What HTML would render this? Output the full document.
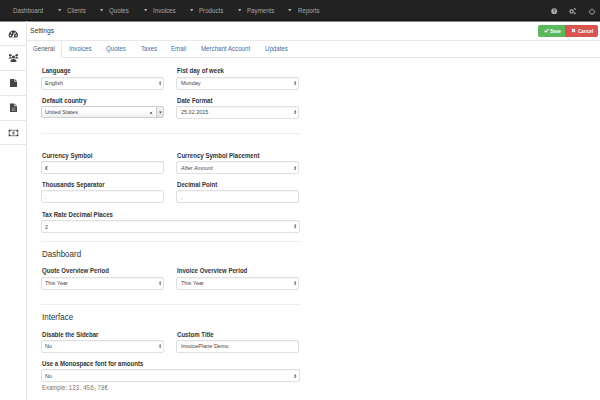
<!DOCTYPE html>
<html><head><meta charset="utf-8">
<style>
*{box-sizing:border-box;margin:0;padding:0}
html,body{width:600px;height:400px;overflow:hidden;background:#fff;font-family:"Liberation Sans",sans-serif;position:relative}
.a{position:absolute;white-space:nowrap;line-height:1;transform-origin:0 0}
.caret{position:absolute;top:9.6px;width:0;height:0;border-left:1.6px solid transparent;border-right:1.6px solid transparent;border-top:1.9px solid #a8a8a8}
.sep{position:absolute;left:0;width:26px;height:1px;background:#e6e6e6}
.hline{position:absolute;height:1px;background:#e8e8e8}
.box{position:absolute;height:12.5px;border:1px solid #e0e0e0;border-radius:2px;background:#fff;box-shadow:inset 0 1px 1px rgba(0,0,0,.04)}
.hr{position:absolute;left:41px;width:259px;height:1px;background:#eee}
.arr{position:absolute;width:3px;height:5px}
</style></head><body>
<div class="a" style="left:0;top:0;width:600px;height:21px;background:#222;border-bottom:1px solid #161616;box-shadow:0 1px 0 rgba(0,0,0,.45)"></div>
<span class="a" style="left:13px;top:8.0px;font-size:6.9px;color:#a4a4a4;transform:scaleX(0.895);">Dashboard</span>
<svg class="a" style="left:57.7px;top:9.3px" width="3.6" height="2.6" viewBox="0 0 3.6 2.6"><path d="M0 0 H3.6 L1.8 2.6Z" fill="#a8a8a8"/></svg>
<span class="a" style="left:67px;top:8.0px;font-size:6.9px;color:#a4a4a4;transform:scaleX(0.895);">Clients</span>
<svg class="a" style="left:99.5px;top:9.3px" width="3.6" height="2.6" viewBox="0 0 3.6 2.6"><path d="M0 0 H3.6 L1.8 2.6Z" fill="#a8a8a8"/></svg>
<span class="a" style="left:109px;top:8.0px;font-size:6.9px;color:#a4a4a4;transform:scaleX(0.895);">Quotes</span>
<svg class="a" style="left:143.5px;top:9.3px" width="3.6" height="2.6" viewBox="0 0 3.6 2.6"><path d="M0 0 H3.6 L1.8 2.6Z" fill="#a8a8a8"/></svg>
<span class="a" style="left:153px;top:8.0px;font-size:6.9px;color:#a4a4a4;transform:scaleX(0.895);">Invoices</span>
<svg class="a" style="left:189.5px;top:9.3px" width="3.6" height="2.6" viewBox="0 0 3.6 2.6"><path d="M0 0 H3.6 L1.8 2.6Z" fill="#a8a8a8"/></svg>
<span class="a" style="left:199px;top:8.0px;font-size:6.9px;color:#a4a4a4;transform:scaleX(0.895);">Products</span>
<svg class="a" style="left:237.5px;top:9.3px" width="3.6" height="2.6" viewBox="0 0 3.6 2.6"><path d="M0 0 H3.6 L1.8 2.6Z" fill="#a8a8a8"/></svg>
<span class="a" style="left:247px;top:8.0px;font-size:6.9px;color:#a4a4a4;transform:scaleX(0.895);">Payments</span>
<svg class="a" style="left:288.4px;top:9.3px" width="3.6" height="2.6" viewBox="0 0 3.6 2.6"><path d="M0 0 H3.6 L1.8 2.6Z" fill="#a8a8a8"/></svg>
<span class="a" style="left:298px;top:8.0px;font-size:6.9px;color:#a4a4a4;transform:scaleX(0.895);">Reports</span>
<svg class="a" style="left:550px;top:6.5px" width="9" height="9" viewBox="0 0 9 9"><circle cx="4.2" cy="4.2" r="2.9" fill="#b0b0b0"/><path d="M3.4 3.4 Q3.4 2.6 4.2 2.6 Q5 2.6 5 3.3 Q5 3.9 4.2 4.2 V4.8" fill="none" stroke="#333" stroke-width=".8"/><circle cx="4.2" cy="5.7" r=".45" fill="#333"/></svg>
<svg class="a" style="left:568px;top:6.5px" width="9" height="9" viewBox="0 0 9 9"><circle cx="3.6" cy="4.4" r="1.6" fill="none" stroke="#b0b0b0" stroke-width="1.2"/><circle cx="6.8" cy="2" r="1" fill="#999"/><circle cx="6.8" cy="6.2" r="1" fill="#999"/></svg>
<svg class="a" style="left:588px;top:6.5px" width="9" height="9" viewBox="0 0 9 9"><path d="M2.6 2.6 A2.5 2.5 0 1 0 5.4 2.6" fill="none" stroke="#aaa" stroke-width="1"/><path d="M4 1.4V3.8" stroke="#aaa" stroke-width=".9"/></svg>
<div class="a" style="left:26px;top:21px;width:1px;height:379px;background:#e6e6e6"></div>
<div class="sep" style="top:45px"></div>
<div class="sep" style="top:70px"></div>
<div class="sep" style="top:95px"></div>
<div class="sep" style="top:119.5px"></div>
<div class="sep" style="top:144px"></div>
<svg class="a" style="left:8px;top:29.6px" width="11" height="9" viewBox="0 0 11 9"><path d="M1.6 7.6 Q.6 6.4 .6 5.2 A4.6 4.6 0 1 1 10 5.2 Q10 6.4 9 7.6 Z" fill="#444"/><circle cx="2.5" cy="5.4" r=".75" fill="#fff"/><circle cx="3.5" cy="3" r=".75" fill="#fff"/><circle cx="7.1" cy="3" r=".75" fill="#fff"/><circle cx="8.1" cy="5.4" r=".75" fill="#fff"/><path d="M5 7 L6.2 3.2" stroke="#fff" stroke-width="1"/><circle cx="5.1" cy="6.8" r="1" fill="#fff"/></svg>
<svg class="a" style="left:8px;top:53px" width="11" height="10" viewBox="0 0 11 10"><circle cx="2.3" cy="2.2" r="1.3" fill="#444"/><circle cx="8.7" cy="2.2" r="1.3" fill="#444"/><path d="M0.6 5.6 Q0.6 3.9 2.3 3.9 Q3.6 3.9 3.8 5 L3.8 5.6Z" fill="#444"/><path d="M7.2 5.6 L7.2 5 Q7.4 3.9 8.7 3.9 Q10.4 3.9 10.4 5.6Z" fill="#444"/><circle cx="5.5" cy="4" r="1.6" fill="#444"/><path d="M2.4 9 Q2.4 5.9 5.5 5.9 Q8.6 5.9 8.6 9Z" fill="#444"/></svg>
<svg class="a" style="left:9px;top:78px" width="9" height="10" viewBox="0 0 9 10"><path d="M1 1 H5.4 V3.6 H8 V9 H1Z" fill="#444"/><path d="M6.1 1.2 L7.9 3 H6.1Z" fill="#555"/></svg>
<svg class="a" style="left:9px;top:103px" width="9" height="10" viewBox="0 0 9 10"><path d="M1 .6 H5.4 V3.2 H8 V9 H1Z" fill="#444"/><path d="M6.1 .8 L7.9 2.6 H6.1Z" fill="#555"/><path d="M2.6 5 H6.4 M2.6 6.3 H6.4 M2.6 7.6 H6.4" stroke="#bbb" stroke-width=".6"/></svg>
<svg class="a" style="left:8px;top:128.5px" width="11" height="8" viewBox="0 0 11 8"><rect x="1.2" y="1.3" width="8.6" height="5.4" fill="#fff" stroke="#888" stroke-width="1"/><circle cx="1.6" cy="1.7" r=".9" fill="#333"/><circle cx="9.4" cy="1.7" r=".9" fill="#333"/><circle cx="1.6" cy="6.3" r=".9" fill="#333"/><circle cx="9.4" cy="6.3" r=".9" fill="#333"/><ellipse cx="5.5" cy="4" rx="1.4" ry="1.8" fill="#888"/></svg>
<span class="a" style="left:30px;top:27.4px;font-size:7.4px;color:#333;transform:scaleX(0.9);">Settings</span>
<div class="a" style="left:538px;top:24.6px;width:27.3px;height:12.4px;background:#5cb85c;border-radius:2px 0 0 2px"></div>
<div class="a" style="left:565.3px;top:24.6px;width:32.8px;height:12.4px;background:#d9534f;border-radius:0 2px 2px 0"></div>
<svg class="a" style="left:543.5px;top:28px" width="5" height="5" viewBox="0 0 5 5"><path d="M.6 2.6 L1.9 3.9 L4.4 1" fill="none" stroke="#fff" stroke-width="1.1"/></svg>
<span class="a" style="left:550px;top:27.6px;font-size:6.1px;color:#fff;transform:scaleX(0.76);font-weight:bold">Save</span>
<svg class="a" style="left:571px;top:28.3px" width="5" height="5" viewBox="0 0 5 5"><path d="M1 1 L4 4 M4 1 L1 4" fill="none" stroke="#fff" stroke-width="1.1"/></svg>
<span class="a" style="left:578px;top:27.6px;font-size:6.1px;color:#fff;transform:scaleX(0.76);font-weight:bold">Cancel</span>
<div class="hline" style="left:27px;top:40px;width:573px"></div>
<div class="hline" style="left:61px;top:57px;width:539px"></div>
<div class="a" style="left:61px;top:40px;width:1px;height:18px;background:#e8e8e8"></div>
<span class="a" style="left:33px;top:45.8px;font-size:6.9px;color:#555;transform:scaleX(0.89);">General</span>
<span class="a" style="left:69px;top:45.8px;font-size:6.9px;color:#3f6d9e;transform:scaleX(0.89);">Invoices</span>
<span class="a" style="left:106.3px;top:45.8px;font-size:6.9px;color:#3f6d9e;transform:scaleX(0.89);">Quotes</span>
<span class="a" style="left:140.8px;top:45.8px;font-size:6.9px;color:#3f6d9e;transform:scaleX(0.89);">Taxes</span>
<span class="a" style="left:170.8px;top:45.8px;font-size:6.9px;color:#3f6d9e;transform:scaleX(0.89);">Email</span>
<span class="a" style="left:200.5px;top:45.8px;font-size:6.9px;color:#3f6d9e;transform:scaleX(0.89);">Merchant Account</span>
<span class="a" style="left:265.2px;top:45.8px;font-size:6.9px;color:#3f6d9e;transform:scaleX(0.89);">Updates</span>
<span class="a" style="left:42px;top:68.31px;font-size:6.8px;color:#333;transform:scaleX(0.895);font-weight:bold">Language</span>
<span class="a" style="left:177px;top:68.31px;font-size:6.8px;color:#333;transform:scaleX(0.895);font-weight:bold">Fist day of week</span>
<div class="box" style="left:41px;top:76.7px;width:123px;height:13px;"></div>
<div class="box" style="left:176px;top:76.7px;width:123px;height:13px;"></div>
<span class="a" style="left:45px;top:81.22px;font-size:5.9px;color:#444;transform:scaleX(0.93);">English</span>
<span class="a" style="left:180.5px;top:81.22px;font-size:5.9px;color:#444;transform:scaleX(0.93);">Monday</span>
<svg class="a" style="left:158.8px;top:81.0px" width="2.4" height="4.4" viewBox="0 0 3 5" preserveAspectRatio="none"><path d="M0 2.1 L1.5 0 L3 2.1Z M0 2.9 L1.5 5 L3 2.9Z" fill="#555"/></svg>
<svg class="a" style="left:294.3px;top:81.0px" width="2.4" height="4.4" viewBox="0 0 3 5" preserveAspectRatio="none"><path d="M0 2.1 L1.5 0 L3 2.1Z M0 2.9 L1.5 5 L3 2.9Z" fill="#555"/></svg>
<span class="a" style="left:42px;top:98.01px;font-size:6.8px;color:#333;transform:scaleX(0.895);font-weight:bold">Default country</span>
<span class="a" style="left:177px;top:98.01px;font-size:6.8px;color:#333;transform:scaleX(0.895);font-weight:bold">Date Format</span>
<div class="box" style="left:41px;top:106px;width:123px;height:11.8px;background:linear-gradient(#fff 40%,#eee);border-color:#d0d0d0;box-shadow:none"></div>
<div class="a" style="left:156px;top:107px;width:7px;height:9.8px;background:linear-gradient(#f4f4f4,#e0e0e0);border-left:1px solid #ccc"></div>
<svg class="a" style="left:149px;top:110.5px" width="4" height="4" viewBox="0 0 4 4"><path d="M.9 .9 L3.1 3.1 M3.1 .9 L.9 3.1" stroke="#666" stroke-width=".8"/></svg>
<svg class="a" style="left:158.5px;top:111px" width="3" height="3" viewBox="0 0 3 3"><path d="M0 .5 H3 L1.5 2.5Z" fill="#555"/></svg>
<span class="a" style="left:45px;top:109.92px;font-size:5.9px;color:#444;transform:scaleX(0.93);">United States</span>
<div class="box" style="left:176px;top:105.8px;width:123px;height:13px;"></div>
<span class="a" style="left:180.5px;top:110.32px;font-size:5.9px;color:#444;transform:scaleX(0.93);">25.02.2015</span>
<svg class="a" style="left:294.3px;top:110.1px" width="2.4" height="4.4" viewBox="0 0 3 5" preserveAspectRatio="none"><path d="M0 2.1 L1.5 0 L3 2.1Z M0 2.9 L1.5 5 L3 2.9Z" fill="#555"/></svg>
<div class="hr" style="top:133px"></div>
<span class="a" style="left:42px;top:152.81px;font-size:6.8px;color:#333;transform:scaleX(0.895);font-weight:bold">Currency Symbol</span>
<span class="a" style="left:177px;top:152.81px;font-size:6.8px;color:#333;transform:scaleX(0.895);font-weight:bold">Currency Symbol Placement</span>
<div class="box" style="left:41px;top:161.2px;width:123px;height:13px;"></div>
<div class="box" style="left:176px;top:161.2px;width:123px;height:13px;"></div>
<span class="a" style="left:45px;top:165.72px;font-size:5.9px;color:#444;transform:scaleX(0.93);">€</span>
<span class="a" style="left:180.5px;top:165.72px;font-size:5.9px;color:#444;transform:scaleX(0.93);font-style:italic">After Amount</span>
<svg class="a" style="left:294.3px;top:165.5px" width="2.4" height="4.4" viewBox="0 0 3 5" preserveAspectRatio="none"><path d="M0 2.1 L1.5 0 L3 2.1Z M0 2.9 L1.5 5 L3 2.9Z" fill="#555"/></svg>
<span class="a" style="left:42px;top:182.01px;font-size:6.8px;color:#333;transform:scaleX(0.895);font-weight:bold">Thousands Separator</span>
<span class="a" style="left:177px;top:182.01px;font-size:6.8px;color:#333;transform:scaleX(0.895);font-weight:bold">Decimal Point</span>
<div class="box" style="left:41px;top:190.4px;width:123px;height:13px;"></div>
<div class="box" style="left:176px;top:190.4px;width:123px;height:13px;"></div>
<span class="a" style="left:45px;top:194.92px;font-size:5.9px;color:#444;transform:scaleX(0.93);">.</span>
<span class="a" style="left:180.5px;top:194.92px;font-size:5.9px;color:#444;transform:scaleX(0.93);">,</span>
<span class="a" style="left:42px;top:211.51px;font-size:6.8px;color:#333;transform:scaleX(0.895);font-weight:bold">Tax Rate Decimal Places</span>
<div class="box" style="left:41px;top:220.1px;width:258.5px;height:13px;"></div>
<span class="a" style="left:45px;top:224.62px;font-size:5.9px;color:#444;transform:scaleX(0.93);">2</span>
<svg class="a" style="left:294.3px;top:224.4px" width="2.4" height="4.4" viewBox="0 0 3 5" preserveAspectRatio="none"><path d="M0 2.1 L1.5 0 L3 2.1Z M0 2.9 L1.5 5 L3 2.9Z" fill="#555"/></svg>
<div class="hr" style="top:241px"></div>
<span class="a" style="left:42px;top:250.44px;font-size:8.9px;color:#333;transform:scaleX(0.9);">Dashboard</span>
<span class="a" style="left:42px;top:268.31px;font-size:6.8px;color:#333;transform:scaleX(0.895);font-weight:bold">Quote Overview Period</span>
<span class="a" style="left:177px;top:268.31px;font-size:6.8px;color:#333;transform:scaleX(0.895);font-weight:bold">Invoice Overview Period</span>
<div class="box" style="left:41px;top:276.8px;width:123px;height:13px;"></div>
<div class="box" style="left:176px;top:276.8px;width:123px;height:13px;"></div>
<span class="a" style="left:45px;top:281.32px;font-size:5.9px;color:#444;transform:scaleX(0.93);">This Year</span>
<span class="a" style="left:180.5px;top:281.32px;font-size:5.9px;color:#444;transform:scaleX(0.93);">This Year</span>
<svg class="a" style="left:158.8px;top:281.1px" width="2.4" height="4.4" viewBox="0 0 3 5" preserveAspectRatio="none"><path d="M0 2.1 L1.5 0 L3 2.1Z M0 2.9 L1.5 5 L3 2.9Z" fill="#555"/></svg>
<svg class="a" style="left:294.3px;top:281.1px" width="2.4" height="4.4" viewBox="0 0 3 5" preserveAspectRatio="none"><path d="M0 2.1 L1.5 0 L3 2.1Z M0 2.9 L1.5 5 L3 2.9Z" fill="#555"/></svg>
<div class="hr" style="top:304px"></div>
<span class="a" style="left:42px;top:313.44px;font-size:8.9px;color:#333;transform:scaleX(0.9);">Interface</span>
<span class="a" style="left:42px;top:331.51px;font-size:6.8px;color:#333;transform:scaleX(0.895);font-weight:bold">Disable the Sidebar</span>
<span class="a" style="left:177px;top:331.51px;font-size:6.8px;color:#333;transform:scaleX(0.895);font-weight:bold">Custom Title</span>
<div class="box" style="left:41px;top:339.7px;width:123px;height:13px;"></div>
<div class="box" style="left:176px;top:339.7px;width:123px;height:13px;"></div>
<span class="a" style="left:45px;top:344.22px;font-size:5.9px;color:#444;transform:scaleX(0.93);">No</span>
<span class="a" style="left:180.5px;top:344.22px;font-size:5.9px;color:#444;transform:scaleX(0.93);">InvoicePlane Demo</span>
<svg class="a" style="left:158.8px;top:344.0px" width="2.4" height="4.4" viewBox="0 0 3 5" preserveAspectRatio="none"><path d="M0 2.1 L1.5 0 L3 2.1Z M0 2.9 L1.5 5 L3 2.9Z" fill="#555"/></svg>
<span class="a" style="left:42px;top:361.11px;font-size:6.8px;color:#333;transform:scaleX(0.895);font-weight:bold">Use a Monospace font for amounts</span>
<div class="box" style="left:41px;top:369.4px;width:258.5px;height:13px;"></div>
<span class="a" style="left:45px;top:373.92px;font-size:5.9px;color:#444;transform:scaleX(0.93);">No</span>
<svg class="a" style="left:294.3px;top:373.7px" width="2.4" height="4.4" viewBox="0 0 3 5" preserveAspectRatio="none"><path d="M0 2.1 L1.5 0 L3 2.1Z M0 2.9 L1.5 5 L3 2.9Z" fill="#555"/></svg>
<span class="a" style="left:42px;top:385.2px;font-size:6.3px;color:#777;transform:scaleX(0.95);">Example: <span style="font-family:'Liberation Mono',monospace">123.456,78€</span></span>
</body></html>
